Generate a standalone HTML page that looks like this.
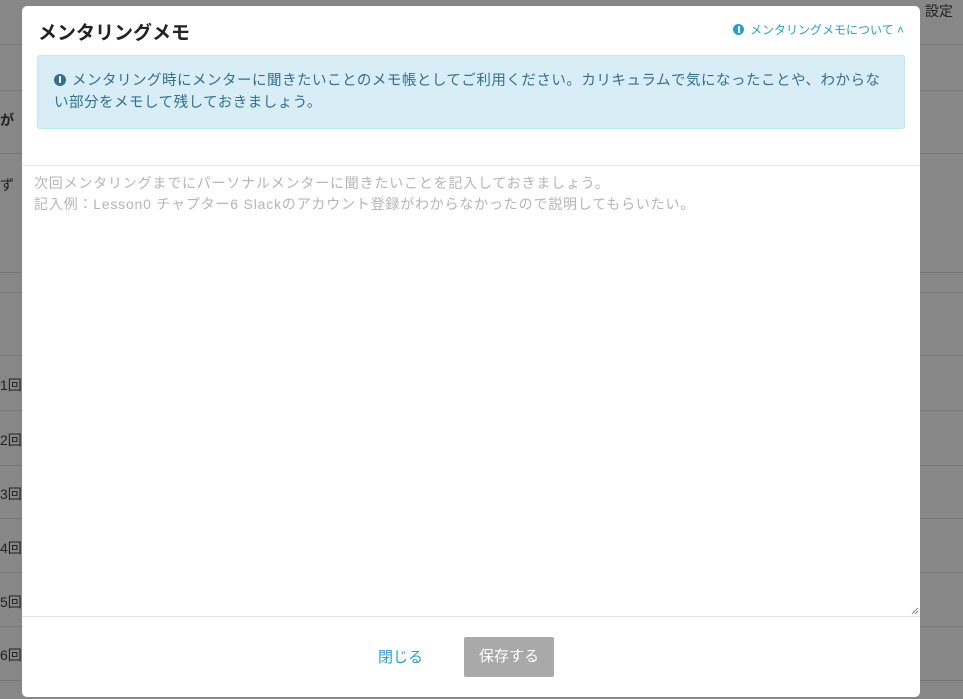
<!DOCTYPE html>
<html><head><meta charset="utf-8"><style>
body{margin:0;width:963px;height:699px;overflow:hidden;background:#878787;font-family:"Liberation Sans","Noto Sans CJK JP",sans-serif;position:relative}
.bg div{position:absolute;left:0;width:963px;height:1px;background:#777}
.bgt{position:absolute;color:#222;font-size:14px}
.modal{position:absolute;left:22px;top:6px;width:898px;height:691px;background:#fff;border-radius:5px}
h1{position:absolute;left:16px;top:12px;margin:0;font-size:19px;font-weight:bold;color:#222}
.about{position:absolute;right:16px;top:15px;font-size:12px;color:#2a9fc9}
.ic{display:inline-block;width:11px;height:11px;border-radius:50%;background:#2a9fc9;vertical-align:-1px;position:relative;margin-right:6px}
.ic:after{content:"";position:absolute;left:4.5px;top:4px;width:2px;height:5px;background:#fff}
.ic:before{content:"";position:absolute;left:4.5px;top:1.5px;width:2px;height:2px;background:#fff}
.alert{position:absolute;left:15px;top:49px;width:868px;height:74px;box-sizing:border-box;background:#d9edf7;border:1px solid #bce8f1;border-radius:3px;padding:14px 10px 14px 16px;color:#31708f;font-size:14.5px;letter-spacing:0.5px;line-height:22px;white-space:nowrap}
.alert .ic{background:#31708f;width:12px;height:12px}
.hr1{position:absolute;left:0;top:159px;width:898px;height:1px;background:#e5e5e5}
.ph{position:absolute;left:12px;top:167px;font-size:14px;letter-spacing:0.8px;line-height:21px;color:#b5b5b5;white-space:nowrap}
.hr2{position:absolute;left:0;top:610px;width:898px;height:1px;background:#e5e5e5}
.close{position:absolute;left:356px;top:640px;font-size:15px;color:#2a9fc9}
.save{position:absolute;left:442px;top:631px;width:90px;height:40px;background:#a9a9a9;border-radius:2px;color:#fff;font-size:15px;text-align:center;line-height:40px}
</style></head><body>
<div class="bg"><div style="top:44px"></div><div style="top:90px"></div><div style="top:153px"></div><div style="top:272px"></div><div style="top:292px"></div><div style="top:355px"></div><div style="top:410px"></div><div style="top:465px"></div><div style="top:518px"></div><div style="top:572px"></div><div style="top:626px"></div><div style="top:680px"></div></div>
<div class="bgt" style="left:925px;top:1px">設定</div>
<div class="bgt" style="left:0;top:110px;font-weight:bold">が</div>
<div class="bgt" style="left:0;top:175px">ず</div>
<div class="bgt" style="left:0;top:375px">1回</div>
<div class="bgt" style="left:0;top:430px">2回</div>
<div class="bgt" style="left:0;top:484px">3回</div>
<div class="bgt" style="left:0;top:538px">4回</div>
<div class="bgt" style="left:0;top:592px">5回</div>
<div class="bgt" style="left:0;top:645px">6回</div>
<div class="modal">
<h1>メンタリングメモ</h1>
<div class="about"><span class="ic"></span>メンタリングメモについて ˄</div>
<div class="alert"><span class="ic"></span>メンタリング時にメンターに聞きたいことのメモ帳としてご利用ください。カリキュラムで気になったことや、わからな<br>い部分をメモして残しておきましょう。</div>
<div class="hr1"></div>
<div class="ph">次回メンタリングまでにパーソナルメンターに聞きたいことを記入しておきましょう。<br>記入例：Lesson0 チャプター6 Slackのアカウント登録がわからなかったので説明してもらいたい。</div>
<svg style="position:absolute;left:889px;top:601px" width="8" height="8"><path d="M1 7L7 1M4 7L7 4" stroke="#888" stroke-width="1"/></svg>
<div class="hr2"></div>
<div class="close">閉じる</div>
<div class="save">保存する</div>
</div>
</body></html>
